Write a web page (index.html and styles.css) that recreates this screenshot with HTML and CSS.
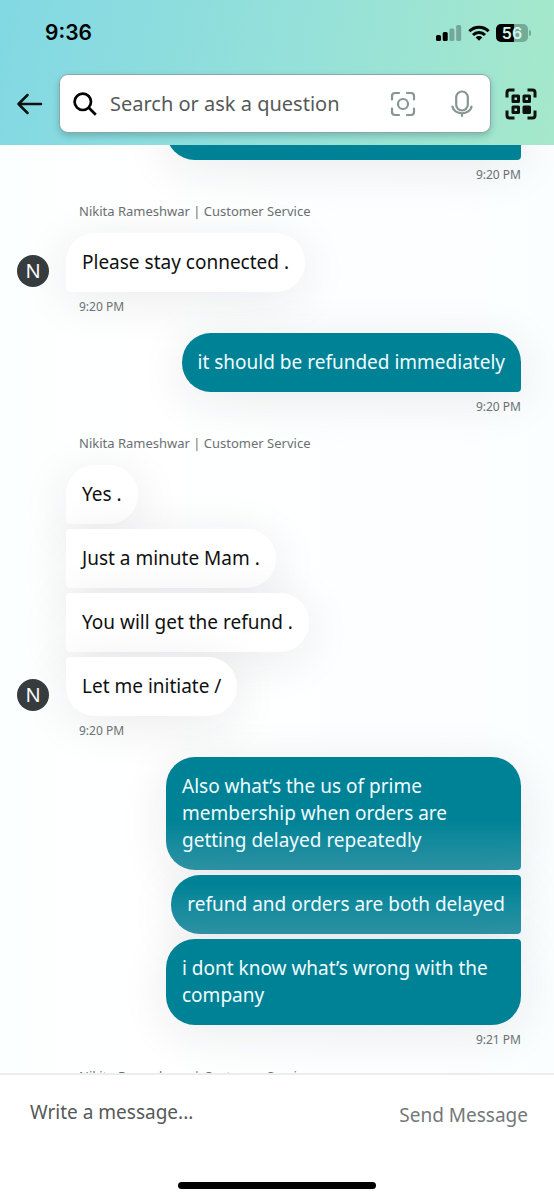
FILE: index.html
```html
<!DOCTYPE html>
<html lang="en">
<head>
<meta charset="utf-8">
<meta name="viewport" content="width=device-width, initial-scale=1">
<title>Customer Service chat</title>
<link rel="stylesheet" href="styles.css">
</head>
<body>
<div class="app">
  <header class="header">
    <div class="status">
      <span class="clock">9:36</span>
      <div class="indicators">
        <svg class="signal" width="26" height="16" viewBox="0 0 26 16" aria-hidden="true">
          <rect x="0" y="10" width="5" height="6" rx="1.5"/>
          <rect x="6.7" y="7" width="5" height="9" rx="1.5"/>
          <rect x="13.4" y="3.5" width="5" height="12.500" rx="1.5" opacity=".27"/>
          <rect x="20.200" y="0" width="5" height="16" rx="1.500" opacity=".27"/>
        </svg>
        <svg width="22" height="16" viewBox="0 0 22 16" aria-hidden="true">
          <g fill="none" stroke="#000" stroke-width="3">
            <path d="M1.400 6.300a13.600 13.600 0 0 1 19.200 0"/>
            <path d="M5 10a8.500 8.500 0 0 1 12 0"/>
          </g>
          <path d="M7.700 12.400a4.700 4.700 0 0 1 6.600 0L11 15.700z"/>
        </svg>
        <div class="battery"><span class="level">56</span><span class="tip"></span></div>
      </div>
    </div>
    <div class="toolbar">
      <button class="icon-btn back" aria-label="Back">
        <svg width="26" height="22" viewBox="0 0 26 22" fill="none" stroke="#0f1111" stroke-width="2.500" stroke-linecap="round" stroke-linejoin="round"><path d="M24 11H1.500M10.500 2L1.500 11l9 9"/></svg>
      </button>
      <div class="search">
        <svg width="24" height="24" viewBox="0 0 24 24" fill="none" stroke="#000" stroke-width="2.700" aria-hidden="true"><circle cx="9.800" cy="9.800" r="8.200"/><path d="M15.800 15.800l7 7"/></svg>
        <input class="search-input" type="text" aria-label="Search" placeholder="Search or ask a question">
        <button class="icon-btn lens" aria-label="Camera search">
          <svg width="26" height="26" viewBox="0 0 26 26" fill="none" stroke="#879596" stroke-width="2.200" stroke-linecap="round"><path d="M2 8.500V5a3 3 0 0 1 3-3h4M17 2h4a3 3 0 0 1 3 3v3.500M24 17.500V21a3 3 0 0 1-3 3h-4M9 24H5a3 3 0 0 1-3-3v-3.500"/><circle cx="13" cy="13" r="5"/></svg>
        </button>
        <button class="icon-btn" aria-label="Voice search">
          <svg width="22" height="28" viewBox="0 0 22 28" fill="none" stroke="#879596" stroke-width="2.200" stroke-linecap="round"><rect x="5.200" y="1.500" width="11.600" height="19" rx="5.800"/><path d="M1.400 16.500a9.700 8 0 0 0 19.200 0M11 24.500V26"/></svg>
        </button>
      </div>
      <button class="icon-btn scan" aria-label="Scan code">
        <svg width="32" height="32" viewBox="0 0 32 32" fill="none" stroke="#0f1111" stroke-width="3"><path d="M2 9.500V4.500a2.500 2.500 0 0 1 2.500-2.500h5M22.500 2h5A2.500 2.500 0 0 1 30 4.500v5M30 22.500v5a2.500 2.500 0 0 1-2.500 2.500h-5M9.500 30h-5A2.500 2.500 0 0 1 2 27.500v-5"/><g stroke-linejoin="round"><rect x="8" y="8" width="5.500" height="5.500"/><rect x="19" y="8" width="5.500" height="5.500"/><rect x="8" y="19" width="5.500" height="5.500"/><rect x="19" y="19" width="5.500" height="5.500" fill="#0f1111"/></g></svg>
      </button>
    </div>
  </header>

  <main class="chat">
    <div class="thread">
      <section class="group own">
        <div class="bubble blank"></div>
        <time class="time">9:20 PM</time>
      </section>
      <section class="group agent">
        <div class="name">Nikita Rameshwar | Customer Service</div>
        <div class="row">
          <div class="avatar">N</div>
          <div class="stack"><p class="bubble">Please stay connected .</p></div>
        </div>
        <time class="time">9:20 PM</time>
      </section>
      <section class="group own">
        <p class="bubble">it should be refunded immediately</p>
        <time class="time">9:20 PM</time>
      </section>
      <section class="group agent">
        <div class="name">Nikita Rameshwar | Customer Service</div>
        <div class="row">
          <div class="avatar">N</div>
          <div class="stack">
            <p class="bubble">Yes .</p>
            <p class="bubble middle">Just a minute Mam .</p>
            <p class="bubble middle">You will get the refund .</p>
            <p class="bubble last">Let me initiate /</p>
          </div>
        </div>
        <time class="time">9:20 PM</time>
      </section>
      <section class="group own">
        <p class="bubble shaded">Also what’s the us of prime membership when orders are getting delayed repeatedly</p>
        <p class="bubble middle shaded">refund and orders are both delayed</p>
        <p class="bubble last">i dont know what’s wrong with the company</p>
        <time class="time">9:21 PM</time>
      </section>
      <section class="group agent">
        <div class="name">Nikita Rameshwar | Customer Service</div>
      </section>
    </div>
  </main>

  <footer class="footer">
    <form class="composer">
      <input class="message" type="text" aria-label="Message" placeholder="Write a message...">
      <button class="send" type="button">Send Message</button>
    </form>
    <div class="home-bar"></div>
  </footer>
</div>
</body>
</html>
```
FILE: styles.css
```css
* { box-sizing: border-box; }
body {
  margin: 0;
  font-family: "Noto Sans", "Open Sans", sans-serif;
  color: #0f1111;
}
p { margin: 0; }
button, input {
  font: inherit;
  border: 0;
  padding: 0;
  background: none;
  min-width: 0;
}
svg { display: block; flex: none; }

.app {
  display: flex;
  flex-direction: column;
  height: 100vh;
}

.header {
  flex: none;
  padding-bottom: 12px;
  background: linear-gradient(100deg, #82d8e3 0%, #94e0da 50%, #a5e8cb 100%);
}
.status {
  display: flex;
  justify-content: space-between;
  align-items: center;
  height: 66px;
  padding: 0 23px 0 45px;
}
.clock {
  font: 600 21px/28px Inter, sans-serif;
  color: #000;
}
.indicators { display: flex; align-items: center; gap: 6px; }
.battery { display: flex; align-items: center; gap: 1px; }
.level {
  width: 32px;
  border-radius: 5px;
  background: linear-gradient(90deg, #000 56%, #72ab98 56%);
  color: #d5f5ea;
  font: 600 16px/18px Inter, sans-serif;
  text-align: center;
}
.tip {
  width: 2px;
  height: 6px;
  border-radius: 0 2px 2px 0;
  background: #72ab98;
}
.toolbar {
  display: flex;
  align-items: center;
  gap: 14px;
  padding: 8px 17px 0;
}
.icon-btn { flex: none; color: #0f1111; }
.back { margin-right: 2px; }
.search {
  flex: 1;
  min-width: 0;
  display: flex;
  align-items: center;
  height: 59px;
  padding: 0 17px 0 13px;
  background: #fff;
  border: 1px solid #8ba9ad;
  border-radius: 9px;
  box-shadow: 0 3px 6px rgba(15, 60, 60, .25);
}
.search-input {
  flex: 1;
  margin-left: 13px;
  font-size: 20px;
  line-height: 28px;
}
.search-input::placeholder { color: #565959; opacity: 1; }
.lens { margin-right: 35px; }

.chat {
  flex: 1;
  min-height: 0;
  overflow: hidden;
  background: linear-gradient(90deg, #fcffff, #fff 25%, #fbfeff);
}
.thread {
  display: flex;
  flex-direction: column;
  gap: 16px;
  margin-top: -44px;
  padding: 0 33px 0 17px;
}
.group { display: flex; flex-direction: column; }
.own { align-items: flex-end; }
.agent { align-items: stretch; }
.name {
  margin: 0 0 12px 62px;
  font-size: 13px;
  line-height: 20px;
  color: #6b7172;
}
.row { display: flex; align-items: flex-end; gap: 17px; }
.avatar {
  flex: none;
  width: 32px;
  height: 32px;
  margin-bottom: 5px;
  border-radius: 50%;
  background: #373d3e;
  color: #fff;
  font-size: 20px;
  line-height: 32px;
  text-align: center;
}
.stack {
  display: flex;
  flex-direction: column;
  align-items: flex-start;
  gap: 5px;
}
.bubble {
  max-width: 355px;
  padding: 16px;
  font-size: 19px;
  line-height: 27px;
  box-shadow: 0 8px 50px rgba(30, 35, 45, .09);
}
.agent .bubble {
  background: #fff;
  border-radius: 29px 29px 29px 4px;
}
.agent .middle { border-radius: 4px 29px 29px 4px; }
.agent .last { border-radius: 4px 29px 29px 29px; }
.own .bubble {
  background: #008296;
  color: #f1fcff;
  border-radius: 29px 29px 4px 29px;
}
.own .middle { border-radius: 29px 4px 4px 29px; }
.own .last { border-radius: 29px 4px 29px 29px; }
.own .bubble + .bubble { margin-top: 5px; }
.own .shaded {
  background: linear-gradient(to bottom, #008296 calc(100% - 50px), #2f94a6);
}
.blank { width: 355px; height: 59px; }
.time {
  margin-top: 5px;
  font-size: 12px;
  line-height: 20px;
  color: #6b7172;
}
.agent .time { margin-left: 62px; }

.footer {
  flex: none;
  background: #fff;
  border-top: 2px solid #ebedee;
}
.composer {
  display: flex;
  align-items: center;
  gap: 16px;
  padding: 18px 26px 0 30px;
}
.message {
  flex: 1;
  margin-bottom: 6px;
  font-size: 19px;
  line-height: 28px;
}
.message::placeholder { color: #565959; opacity: 1; }
.send {
  flex: none;
  font-size: 19px;
  line-height: 44px;
  color: #737878;
}
.home-bar {
  width: 198px;
  height: 7px;
  margin: 45px auto 11px;
  border-radius: 4px;
  background: #000;
}
```
